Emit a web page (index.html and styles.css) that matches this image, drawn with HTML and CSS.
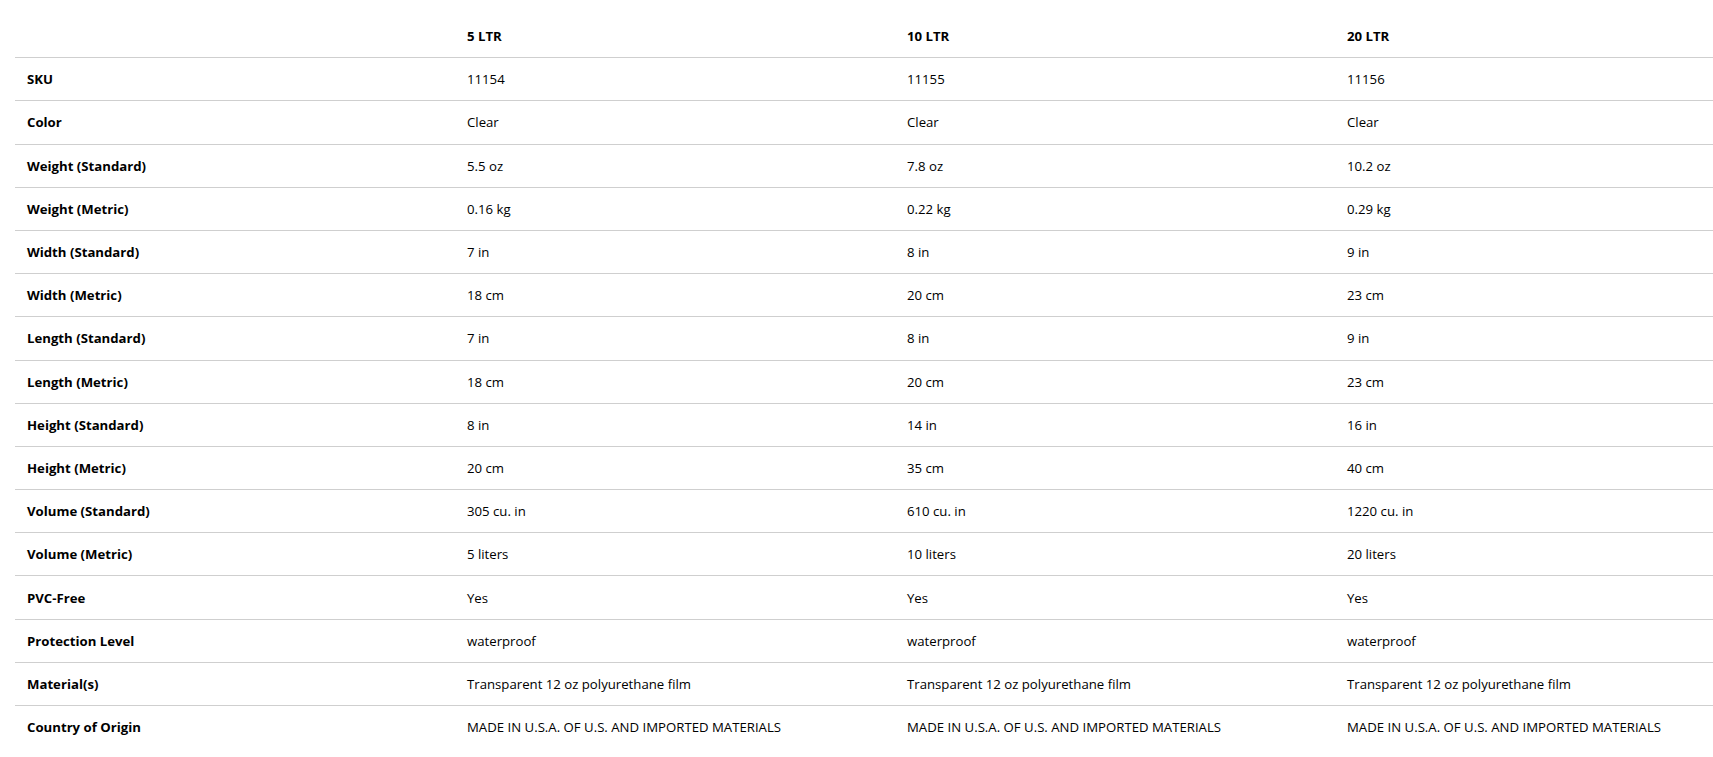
FILE: index.html
```html
<!DOCTYPE html>
<html><head><link rel="stylesheet" href="styles.css"></head>
<body>
<div class="wrap">
<table class="specs">
<colgroup><col class="c"><col class="c"><col class="c"><col class="last"></colgroup>
<thead>
<tr><th></th><th>5 LTR</th><th>10 LTR</th><th>20 LTR</th></tr>
</thead>
<tbody>
<tr><th>SKU</th><td>11154</td><td>11155</td><td>11156</td></tr>
<tr><th>Color</th><td>Clear</td><td>Clear</td><td>Clear</td></tr>
<tr><th>Weight (Standard)</th><td>5.5 oz</td><td>7.8 oz</td><td>10.2 oz</td></tr>
<tr><th>Weight (Metric)</th><td>0.16 kg</td><td>0.22 kg</td><td>0.29 kg</td></tr>
<tr><th>Width (Standard)</th><td>7 in</td><td>8 in</td><td>9 in</td></tr>
<tr><th>Width (Metric)</th><td>18 cm</td><td>20 cm</td><td>23 cm</td></tr>
<tr><th>Length (Standard)</th><td>7 in</td><td>8 in</td><td>9 in</td></tr>
<tr><th>Length (Metric)</th><td>18 cm</td><td>20 cm</td><td>23 cm</td></tr>
<tr><th>Height (Standard)</th><td>8 in</td><td>14 in</td><td>16 in</td></tr>
<tr><th>Height (Metric)</th><td>20 cm</td><td>35 cm</td><td>40 cm</td></tr>
<tr><th>Volume (Standard)</th><td>305 cu. in</td><td>610 cu. in</td><td>1220 cu. in</td></tr>
<tr><th>Volume (Metric)</th><td>5 liters</td><td>10 liters</td><td>20 liters</td></tr>
<tr><th>PVC-Free</th><td>Yes</td><td>Yes</td><td>Yes</td></tr>
<tr><th>Protection Level</th><td>waterproof</td><td>waterproof</td><td>waterproof</td></tr>
<tr><th>Material(s)</th><td>Transparent 12 oz polyurethane film</td><td>Transparent 12 oz polyurethane film</td><td>Transparent 12 oz polyurethane film</td></tr>
<tr><th>Country of Origin</th><td>MADE IN U.S.A. OF U.S. AND IMPORTED MATERIALS</td><td>MADE IN U.S.A. OF U.S. AND IMPORTED MATERIALS</td><td>MADE IN U.S.A. OF U.S. AND IMPORTED MATERIALS</td></tr>
</tbody>
</table>
</div>
</body></html>
```
FILE: styles.css
```css
html,body{margin:0;padding:0;overflow:hidden;background:#fff}
body{font-family:"Open Sans",Arial,sans-serif;color:#000;font-size:13.2px}
.wrap{padding:15px 0 0 15px}
.specs{border-collapse:collapse;table-layout:fixed;width:1698px}
.specs .c{width:440px}
.specs th,.specs td{text-align:left;padding:0 12px;height:42.2px;line-height:18px;vertical-align:middle;white-space:nowrap}
.specs th{font-weight:700}
.specs td{font-weight:400}
.specs tr{border-bottom:1px solid #cfcfcf}
.specs tbody tr:last-child{border-bottom:none}
```
